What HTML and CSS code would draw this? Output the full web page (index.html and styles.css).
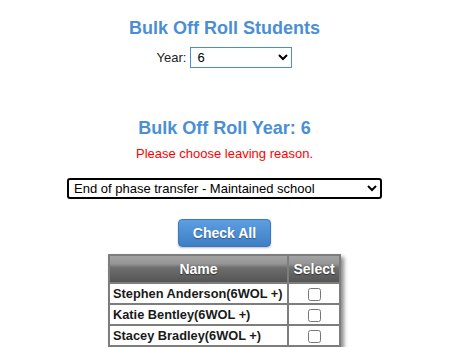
FILE: index.html
```html
<!DOCTYPE html>
<html>
<head>
<meta charset="utf-8">
<link rel="stylesheet" href="styles.css">
</head>
<body>
<div class="page">
  <h2 class="title">Bulk Off Roll Students</h2>
  <div class="year-row">
    <label class="year-label" for="year">Year:</label>
    <select id="year" class="year-select">
      <option>6</option>
    </select>
  </div>
  <h2 class="title title-second">Bulk Off Roll Year: 6</h2>
  <p class="error">Please choose leaving reason.</p>
  <select class="reason-select">
    <option>End of phase transfer - Maintained school</option>
  </select>
  <button class="check-all" type="button">Check All</button>
  <table class="students">
    <thead>
      <tr><th class="col-name">Name</th><th class="col-select">Select</th></tr>
    </thead>
    <tbody>
      <tr><td class="name">Stephen Anderson(6WOL +)</td><td class="sel"><input type="checkbox"></td></tr>
      <tr><td class="name">Katie Bentley(6WOL +)</td><td class="sel"><input type="checkbox"></td></tr>
      <tr><td class="name">Stacey Bradley(6WOL +)</td><td class="sel"><input type="checkbox"></td></tr>
    </tbody>
  </table>
</div>
</body>
</html>
```
FILE: styles.css
```css
html, body {
  margin: 0;
  padding: 0;
  background: #fff;
  overflow: hidden;
}
.page {
  display: flex;
  flex-direction: column;
  align-items: center;
  font-family: "Liberation Sans", Arial, sans-serif;
  padding-top: 17px;
  width: 449px;
}
.title {
  margin: 0;
  font-size: 18px;
  line-height: 22px;
  font-weight: bold;
  color: #4a8fd6;
}
.year-row {
  display: flex;
  align-items: center;
  gap: 4px;
  margin-top: 8px;
}
.year-label {
  font-size: 13px;
  color: #222;
}
.year-select {
  width: 102px;
  height: 21px;
  border: 1px solid #4a8fd6;
  border-radius: 0;
  font-family: "Liberation Sans", Arial, sans-serif;
  font-size: 13px;
  background: #fff;
  color: #000;
  padding: 0 2px;
}
.title-second {
  margin-top: 49px;
}
.error {
  margin: 7px 0 0;
  font-size: 13px;
  line-height: 16px;
  color: #ff0000;
}
.reason-select {
  margin-top: 16px;
  width: 315px;
  height: 21px;
  border: 2px solid #000;
  border-radius: 3px;
  font-family: "Liberation Sans", Arial, sans-serif;
  font-size: 13px;
  background: #fff;
  color: #000;
  padding: 0 1px;
}
.check-all {
  margin-top: 20px;
  width: 93px;
  height: 28px;
  border: 1px solid #3b78bd;
  border-radius: 4px;
  background: linear-gradient(#5d9fe2, #3f7ec4);
  color: #fff;
  font-family: "Liberation Sans", Arial, sans-serif;
  font-size: 14px;
  font-weight: bold;
  text-shadow: 0 1px 1px rgba(0,0,0,0.35);
  box-shadow: 0 1px 2px rgba(0,0,0,0.25);
  padding: 0;
}
.students {
  margin-top: 7px;
  border-collapse: collapse;
  width: 233px;
  box-shadow: 3px 3px 4px rgba(0,0,0,0.45);
}
.students th, .students td {
  border: 2px solid #7d7d7d;
}
.students th {
  height: 26px;
  padding: 0;
  background: linear-gradient(#a3a3a3 0%, #959595 30%, #6e6e6e 45%, #555 100%);
  color: #fff;
  font-size: 14px;
  font-weight: bold;
  text-shadow: 0 1px 1px rgba(0,0,0,0.5);
}
.students td {
  height: 19px;
  padding: 0 3px;
  font-size: 12.8px;
  font-weight: bold;
  color: #1a1a1a;
  background: #fff;
  white-space: nowrap;
}
.students .col-select {
  width: 50px;
}
.students .sel {
  text-align: center;
  padding: 0;
}
.students input {
  margin: 0;
  width: 13px;
  height: 13px;
  vertical-align: middle;
}
```
